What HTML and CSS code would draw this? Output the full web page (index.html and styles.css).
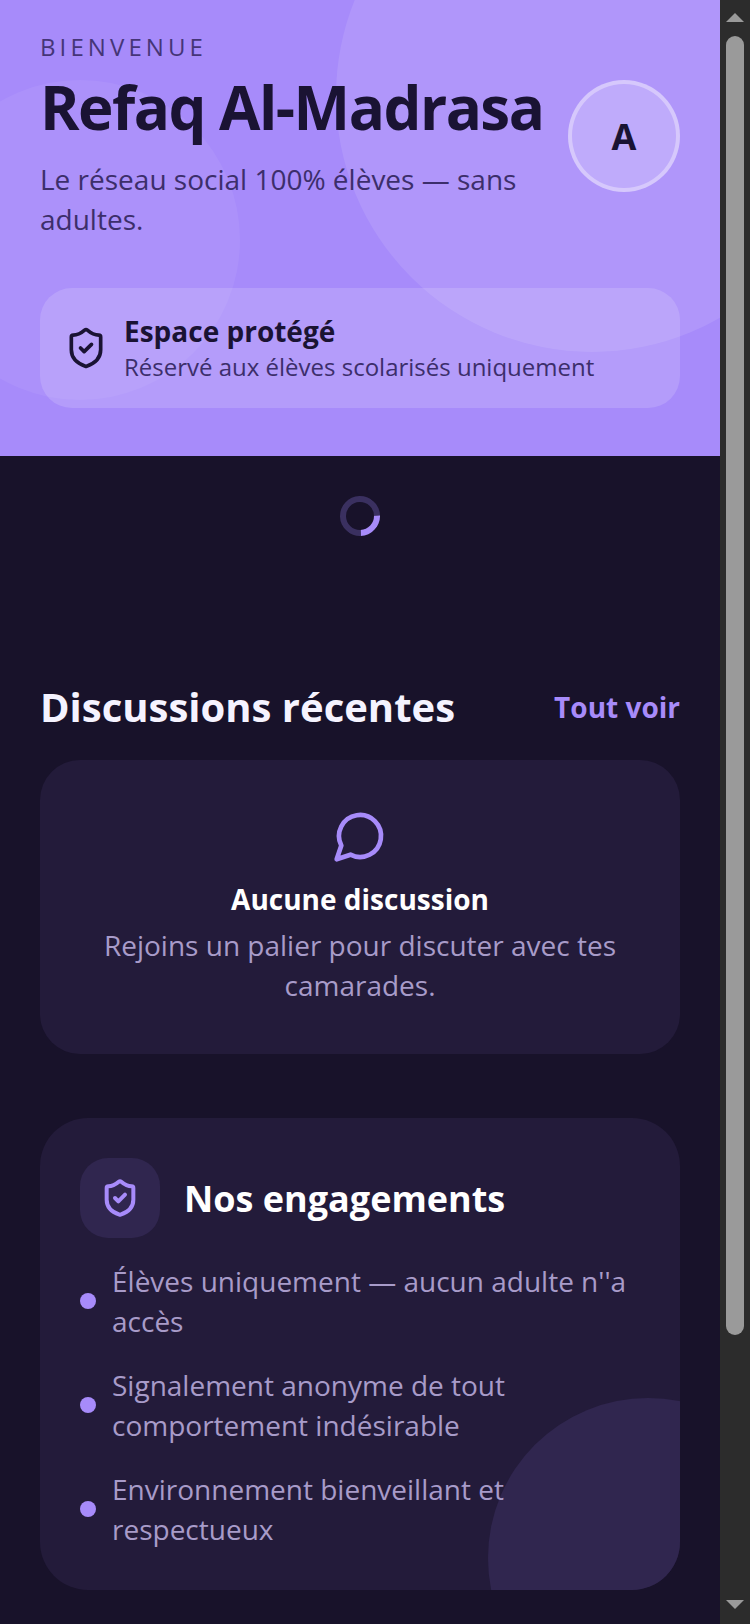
FILE: index.html
```html
<!DOCTYPE html>
<html lang="fr">
<head>
    <meta charset="UTF-8">
    <meta name="viewport" content="width=device-width, initial-scale=1.0">
    <title>Refaq Al-Madrasa</title>
    <link rel="stylesheet" href="styles.css">
</head>
<body>
    <main class="page">
        <!-- Hero -->
        <section class="hero">
            <span class="hero-circle hero-circle-big"></span>
            <span class="hero-circle hero-circle-small"></span>

            <div class="hero-top">
                <div class="hero-text">
                    <p class="hero-label">BIENVENUE</p>
                    <h1 class="hero-title">Refaq Al-Madrasa</h1>
                    <p class="hero-sub">Le réseau social 100% élèves — sans adultes.</p>
                </div>
                <div class="avatar">A</div>
            </div>

            <div class="safe-card">
                <svg class="safe-icon" viewBox="0 0 24 24" fill="none" stroke="currentColor" stroke-width="2" stroke-linecap="round" stroke-linejoin="round">
                    <path d="M20 13c0 5-3.5 7.5-7.66 8.95a1 1 0 0 1-.67-.01C7.5 20.5 4 18 4 13V6a1 1 0 0 1 1-1c2 0 4.5-1.2 6.24-2.72a1.17 1.17 0 0 1 1.52 0C14.51 3.81 17 5 19 5a1 1 0 0 1 1 1z"/>
                    <path d="m9 12 2 2 4-4"/>
                </svg>
                <div class="safe-text">
                    <p class="safe-title">Espace protégé</p>
                    <p class="safe-sub">Réservé aux élèves scolarisés uniquement</p>
                </div>
            </div>
        </section>

        <!-- Loader -->
        <div class="loader">
            <div class="spinner"></div>
        </div>

        <!-- Discussions -->
        <section class="discussions">
            <div class="section-head">
                <h2 class="section-title">Discussions récentes</h2>
                <a class="section-link" href="#">Tout voir</a>
            </div>
            <div class="empty-card">
                <svg class="empty-icon" viewBox="0 0 24 24" fill="none" stroke="currentColor" stroke-width="2" stroke-linecap="round" stroke-linejoin="round">
                    <path d="M7.9 20A9 9 0 1 0 4 16.1L2 22Z"/>
                </svg>
                <p class="empty-title">Aucune discussion</p>
                <p class="empty-text">Rejoins un palier pour discuter avec tes camarades.</p>
            </div>
        </section>

        <!-- Engagements -->
        <section class="promises">
            <span class="promises-circle"></span>
            <div class="promises-head">
                <div class="promises-badge">
                    <svg class="promises-icon" viewBox="0 0 24 24" fill="none" stroke="currentColor" stroke-width="2.4" stroke-linecap="round" stroke-linejoin="round">
                        <path d="M20 13c0 5-3.5 7.5-7.66 8.95a1 1 0 0 1-.67-.01C7.5 20.5 4 18 4 13V6a1 1 0 0 1 1-1c2 0 4.5-1.2 6.24-2.72a1.17 1.17 0 0 1 1.52 0C14.51 3.81 17 5 19 5a1 1 0 0 1 1 1z"/>
                        <path d="m9 12 2 2 4-4"/>
                    </svg>
                </div>
                <h2 class="promises-title">Nos engagements</h2>
            </div>
            <ul class="promises-list">
                <li class="promises-item"><span class="dot"></span><span>Élèves uniquement — aucun adulte n''a accès</span></li>
                <li class="promises-item"><span class="dot"></span><span>Signalement anonyme de tout comportement indésirable</span></li>
                <li class="promises-item"><span class="dot"></span><span>Environnement bienveillant et respectueux</span></li>
            </ul>
        </section>
    </main>

    <!-- Scrollbar as it shows in the screenshot -->
    <div class="scrollbar">
        <span class="arrow-up"></span>
        <span class="thumb"></span>
        <span class="arrow-down"></span>
    </div>
</body>
</html>
```

FILE: styles.css
```css
html, body {
    margin: 0;
    height: 1624px;
    overflow: hidden;
}
body {
    display: flex;
    font-family: 'Open Sans', sans-serif;
    background: #18122a;
    color: #fff;
}
h1, h2, p, ul {
    margin: 0;
    padding: 0;
}
.page {
    width: 720px;
    height: 1624px;
    overflow: hidden;
    flex: none;
}

/* Hero */
.hero {
    position: relative;
    overflow: hidden;
    padding: 32px 40px 48px;
    background: #a78bfa;
    color: #1a1333;
}
.hero-circle {
    position: absolute;
    border-radius: 50%;
}
.hero-circle-big {
    width: 512px;
    height: 512px;
    top: -160px;
    right: -128px;
    background: rgba(255, 255, 255, 0.1);
}
.hero-circle-small {
    width: 320px;
    height: 320px;
    top: 80px;
    left: -80px;
    background: rgba(255, 255, 255, 0.06);
}
.hero-top {
    position: relative;
    display: flex;
    align-items: center;
    gap: 24px;
}
.hero-text {
    flex: 1;
}
.hero-label {
    margin-top: -1px;
    font-size: 24px;
    line-height: 32px;
    letter-spacing: 4.1px;
    color: #453577;
}
.hero-title {
    margin-top: 8px;
    font-size: 60px;
    line-height: 72px;
    font-weight: 700;
    letter-spacing: -1.5px;
    white-space: nowrap;
}
.hero-sub {
    margin-top: 16px;
    margin-bottom: 1px;
    font-size: 28px;
    line-height: 40px;
    color: #3c2e6b;
}
.avatar {
    flex: none;
    box-sizing: border-box;
    width: 112px;
    height: 112px;
    display: flex;
    align-items: center;
    justify-content: center;
    border: 4px solid rgba(255, 255, 255, 0.35);
    border-radius: 50%;
    background: rgba(255, 255, 255, 0.2);
    font-size: 36px;
    font-weight: 700;
}
.safe-card {
    position: relative;
    display: flex;
    align-items: center;
    gap: 16px;
    margin-top: 48px;
    padding: 24px;
    border-radius: 32px;
    background: rgba(255, 255, 255, 0.15);
}
.safe-icon {
    flex: none;
    width: 44px;
    height: 44px;
}
.safe-title {
    font-size: 28px;
    line-height: 38px;
    font-weight: 700;
}
.safe-sub {
    margin: 1px 0;
    font-size: 24px;
    line-height: 32px;
    color: #3c2e6b;
}

/* Loader */
.loader {
    display: flex;
    justify-content: center;
    padding: 40px 0;
}
.spinner {
    box-sizing: border-box;
    width: 40px;
    height: 40px;
    border: 6px solid #3a3060;
    border-top-color: #a78bfa;
    border-radius: 50%;
    transform: rotate(133deg);
}

/* Discussions */
.discussions {
    padding: 103px 40px 0;
}
.section-head {
    display: flex;
    align-items: center;
    justify-content: space-between;
    margin-bottom: 25px;
}
.section-title {
    font-size: 40px;
    line-height: 56px;
    font-weight: 700;
    color: #f5f3ff;
}
.section-link {
    font-size: 28px;
    font-weight: 700;
    color: #a78bfa;
    text-decoration: none;
}
.empty-card {
    display: flex;
    flex-direction: column;
    align-items: center;
    padding: 48px 48px 49px;
    border-radius: 40px;
    background: #231b3a;
    text-align: center;
}
.empty-icon {
    width: 56px;
    height: 56px;
    color: #a78bfa;
}
.empty-title {
    margin-top: 15px;
    font-size: 28px;
    line-height: 40px;
    font-weight: 700;
}
.empty-text {
    margin-top: 6px;
    font-size: 28px;
    line-height: 40px;
    color: #a89bc9;
}

/* Engagements */
.promises {
    position: relative;
    overflow: hidden;
    margin: 64px 40px 0;
    padding: 40px 40px 41px;
    border-radius: 48px;
    background: #231b3a;
}
.promises-circle {
    position: absolute;
    width: 320px;
    height: 320px;
    right: -128px;
    bottom: -128px;
    border-radius: 50%;
    background: #30264f;
}
.promises-head {
    position: relative;
    display: flex;
    align-items: center;
    gap: 24px;
}
.promises-badge {
    width: 80px;
    height: 80px;
    display: flex;
    align-items: center;
    justify-content: center;
    border-radius: 28px;
    background: #30264f;
}
.promises-icon {
    width: 40px;
    height: 40px;
    color: #a78bfa;
}
.promises-title {
    padding-top: 2px;
    font-size: 36px;
    line-height: 48px;
    font-weight: 700;
}
.promises-list {
    position: relative;
    display: flex;
    flex-direction: column;
    gap: 24px;
    margin-top: 23px;
    list-style: none;
}
.promises-item {
    display: flex;
    align-items: center;
    gap: 16px;
    font-size: 28px;
    line-height: 40px;
    color: #a89bc9;
}
.dot {
    flex: none;
    width: 16px;
    height: 16px;
    border-radius: 50%;
    background: #a78bfa;
}

/* Scrollbar */
.scrollbar {
    flex: none;
    width: 30px;
    height: 1624px;
    display: flex;
    flex-direction: column;
    align-items: center;
    background: #2c2c2c;
}
.arrow-up {
    margin-top: 13px;
    border-left: 9px solid transparent;
    border-right: 9px solid transparent;
    border-bottom: 9px solid #9a9a9a;
}
.thumb {
    width: 18px;
    height: 1299px;
    margin-top: 14px;
    border-radius: 9px;
    background: #9a9a9a;
}
.arrow-down {
    margin-top: auto;
    margin-bottom: 15px;
    border-left: 9px solid transparent;
    border-right: 9px solid transparent;
    border-top: 9px solid #9a9a9a;
}
```
